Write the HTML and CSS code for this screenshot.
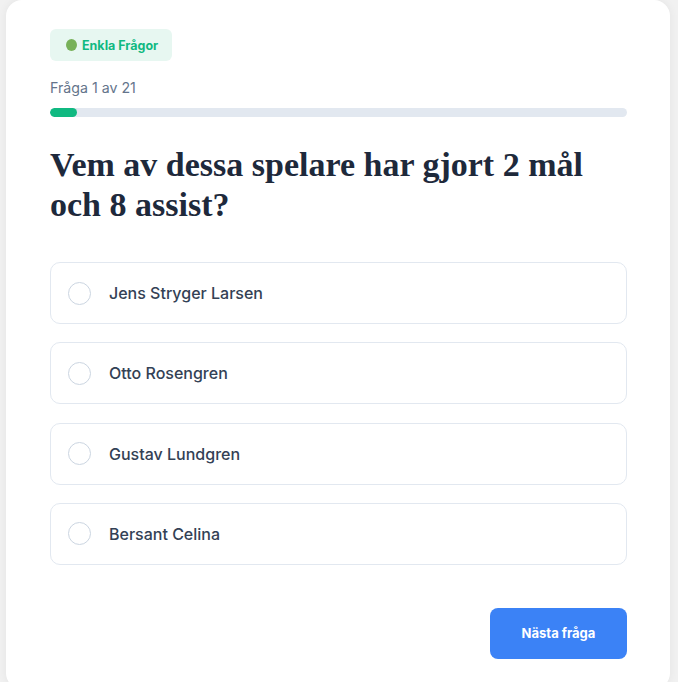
FILE: index.html
```html
<!DOCTYPE html>
<html lang="sv">

<head>
    <meta charset="UTF-8">
    <meta name="viewport" content="width=device-width, initial-scale=1.0">
    <title>Quiz</title>
    <link rel="stylesheet" href="styles.css">
</head>

<body>
    <div class="quiz-card">
        <span class="level-badge"><span class="level-dot"></span>Enkla Frågor</span>

        <div class="progress-label">Fråga 1 av 21</div>
        <div class="progress-track">
            <div class="progress-fill" style="width: 4.76%"></div>
        </div>

        <h1 class="question">Vem av dessa spelare har gjort 2 mål och 8 assist?</h1>

        <div class="options">
            <label class="option">
                <span class="radio"></span>
                <span class="option-text">Jens Stryger Larsen</span>
            </label>
            <label class="option">
                <span class="radio"></span>
                <span class="option-text">Otto Rosengren</span>
            </label>
            <label class="option">
                <span class="radio"></span>
                <span class="option-text">Gustav Lundgren</span>
            </label>
            <label class="option">
                <span class="radio"></span>
                <span class="option-text">Bersant Celina</span>
            </label>
        </div>

        <div class="actions">
            <button class="next-btn">Nästa fråga</button>
        </div>
    </div>
</body>

</html>
```

FILE: styles.css
```css
/* General reset */

* {
    margin: 0;
    padding: 0;
    box-sizing: border-box;
}

body {
    font-family: Inter, "Noto Sans", sans-serif;
    background-color: #f1f1f1;
}

.quiz-card {
    width: 664px;
    margin-left: 6px;
    padding: 29px 43px 30px 44px;
    background-color: #fff;
    border-radius: 16px;
    box-shadow: 0 0 10px rgba(0, 0, 0, 0.06);
}

.level-badge {
    display: inline-flex;
    align-items: center;
    gap: 5px;
    height: 32px;
    padding: 0 14px 0 16px;
    background-color: #e7f7f1;
    border-radius: 6px;
    color: #10b981;
    font-size: 12.5px;
    font-weight: 700;
}

.level-dot {
    width: 11px;
    height: 12px;
    border-radius: 50%;
    background-color: #78b159;
}

.progress-label {
    margin-top: 18px;
    color: #64748b;
    font-size: 14.2px;
    line-height: 17px;
}

.progress-track {
    margin-top: 12px;
    height: 9px;
    background-color: #e2e8f0;
    border-radius: 5px;
    overflow: hidden;
}

.progress-fill {
    height: 100%;
    background-color: #10b981;
    border-radius: 5px;
}

.question {
    margin-top: 28px;
    font-family: "Liberation Serif", "DejaVu Serif", serif;
    font-size: 34px;
    line-height: 40px;
    font-weight: 700;
    color: #1e293b;
}

.options {
    display: flex;
    flex-direction: column;
    gap: 18.3px;
    margin-top: 37px;
}

.option {
    display: flex;
    align-items: center;
    height: 62px;
    padding: 0 17px;
    border: 1px solid #e2e8f0;
    border-radius: 10px;
    cursor: pointer;
}

.radio {
    width: 23px;
    height: 23px;
    border: 1px solid #cbd5e1;
    border-radius: 50%;
    margin-right: 18px;
}

.option-text {
    color: #334155;
    font-size: 16px;
    font-weight: 500;
}

.actions {
    display: flex;
    justify-content: flex-end;
    margin-top: 43px;
}

.next-btn {
    width: 137px;
    height: 51px;
    background-color: #3b82f6;
    color: #fff;
    border: none;
    border-radius: 8px;
    font-family: Inter, "Noto Sans", sans-serif;
    font-size: 13px;
    font-weight: 700;
    cursor: pointer;
}
```
